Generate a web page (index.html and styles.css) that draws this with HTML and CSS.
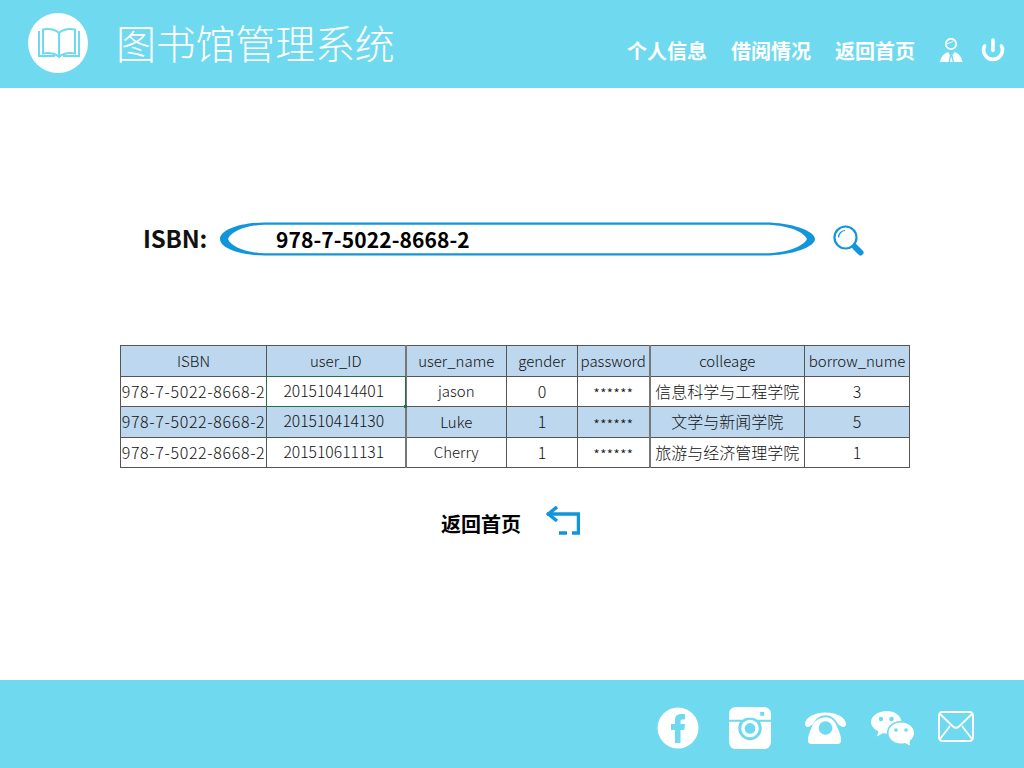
FILE: index.html
```html
<!DOCTYPE html>
<html lang="zh-CN">
<head>
    <meta charset="UTF-8">
    <meta name="viewport" content="width=device-width, initial-scale=1.0">
    <title>图书馆管理系统</title>
    <link rel="stylesheet" href="styles.css">
</head>
<body>
    <header class="top-bar">
        <div class="logo">
            <svg class="logo-book" width="42" height="32" viewBox="0 0 42 32">
                <path d="M21 6C17 2.500 11 1.500 5 2.500V26.500C11 25.500 17 26.500 21 30C25 26.500 31 25.500 37 26.500V2.500C31 1.500 25 2.500 21 6ZM21 6V30" fill="none" stroke="#6fd9ef" stroke-width="2"/>
                <path d="M1 4V29H17M41 4V29H25" fill="none" stroke="#6fd9ef" stroke-width="2"/>
            </svg>
        </div>
        <h1 class="site-title">图书馆管理系统</h1>
        <nav class="nav">
            <a class="nav-link" href="#">个人信息</a>
            <a class="nav-link" href="#">借阅情况</a>
            <a class="nav-link" href="#">返回首页</a>
        </nav>
        <div class="top-icons">
            <svg width="23" height="25" viewBox="0 0 23 25">
                <circle cx="11" cy="6" r="5.200" fill="none" stroke="#fff" stroke-width="1.800"/>
                <path d="M6.500 5.500C9 5.500 11 4.500 13 3" fill="none" stroke="#fff" stroke-width="1"/>
                <path d="M0 24C1 19 3 16 8 14L10 17L8.500 24ZM22.500 24C21.500 19 19.500 16 14.500 14L12.500 17L14 24ZM9.800 24L11.200 18.500L12.700 24Z" fill="#fff"/>
            </svg>
            <svg width="24" height="25" viewBox="0 0 24 25">
                <path d="M12 2V12.500" stroke="#fff" stroke-width="3.600" stroke-linecap="round"/>
                <path d="M3.500 8A9.400 9.400 0 1 0 20.500 8" fill="none" stroke="#fff" stroke-width="3.600" stroke-linecap="round"/>
            </svg>
        </div>
    </header>

    <main class="content">
        <div class="search-row">
            <span class="search-label">ISBN:</span>
            <div class="search-box">
                <svg class="search-ring" width="595" height="34" viewBox="0 0 595 34">
                    <path fill-rule="evenodd" fill="#1296db" d="M0 17C0 8 20 .5 45 .5H545C572 .5 595 9 595 17C595 25 572 33.500 545 33.500H45C20 33.500 0 26 0 17ZM8 17C11 9 28 2.800 45 2.800H545C566 2.800 583 9 587 17C583 25 566 31.200 545 31.200H45C28 31.200 11 25 8 17Z"/>
                </svg>
                <span class="search-value">978-7-5022-8668-2</span>
            </div>
            <svg class="search-icon" width="31" height="31" viewBox="0 0 31 31">
                <circle cx="12.500" cy="12.500" r="11" fill="none" stroke="#1296db" stroke-width="2.200"/>
                <path d="M5.500 12.500A7 7 0 0 1 12 5.500" fill="none" stroke="#1296db" stroke-width="1.200"/>
                <path d="M22 22L27.500 27.500" stroke="#1296db" stroke-width="6" stroke-linecap="round"/>
            </svg>
        </div>

        <table class="records">
            <colgroup>
                <col class="col-isbn"><col class="col-id"><col class="col-name"><col class="col-gender">
                <col class="col-pass"><col class="col-college"><col class="col-num">
            </colgroup>
            <thead>
                <tr class="shaded">
                    <th>ISBN</th><th>user_ID</th><th>user_name</th><th>gender</th><th>password</th><th>colleage</th><th>borrow_nume</th>
                </tr>
            </thead>
            <tbody>
                <tr>
                    <td class="isbn">978-7-5022-8668-2</td><td class="selected">201510414401</td><td class="latin">jason</td><td>0</td><td class="stars">******</td><td>信息科学与工程学院</td><td>3</td>
                </tr>
                <tr class="shaded">
                    <td class="isbn">978-7-5022-8668-2</td><td>201510414130</td><td class="latin">Luke</td><td>1</td><td class="stars">******</td><td>文学与新闻学院</td><td>5</td>
                </tr>
                <tr>
                    <td class="isbn">978-7-5022-8668-2</td><td>201510611131</td><td class="latin">Cherry</td><td>1</td><td class="stars">******</td><td>旅游与经济管理学院</td><td>1</td>
                </tr>
            </tbody>
        </table>

        <a class="back-row" href="#">
            <span class="back-text">返回首页</span>
            <svg width="34" height="30" viewBox="0 0 34 30">
                <path d="M1 8H32.500V26" fill="none" stroke="#1296db" stroke-width="3.500"/>
                <path d="M11 1L2.500 8L11 15" fill="none" stroke="#1296db" stroke-width="3.500"/>
                <path d="M13 27H21M26 27H34" stroke="#1296db" stroke-width="3.500"/>
            </svg>
        </a>
    </main>

    <footer class="bottom-bar">
        <svg width="42" height="42" viewBox="0 0 42 42">
            <circle cx="21" cy="21" r="20.500" fill="#fff"/>
            <path d="M18 36V23H14V17H18V13C18 9 20.500 7 24 7H28V12.500H25.500C24 12.500 23.500 13.200 23.500 14.500V17H28L27.300 23H23.500V36Z" fill="#6fd9ef"/>
        </svg>
        <svg class="insta-icon" width="42" height="42" viewBox="0 0 43 43">
            <path fill="#fff" d="M7 0H36C40 0 43 3 43 7V13H29C27 11.500 24.500 11 21.500 11C18.500 11 16 11.500 14 13H0V7C0 3 3 0 7 0Z"/>
            <path fill="#fff" d="M0 15H11.500C10 17 9.500 19.500 9.500 22A12 12 0 0 0 33.500 22C33.500 19.500 33 17 31.500 15H43V35C43 40 40 43 36 43H7C3 43 0 40 0 35Z"/>
            <circle cx="21.500" cy="22" r="9" fill="#fff"/>
            <circle cx="21.500" cy="22" r="5.500" fill="#6fd9ef"/>
            <rect x="32" y="5" width="4" height="4" fill="#6fd9ef"/>
        </svg>
        <svg class="phone-icon" width="41" height="33" viewBox="0 0 42 33">
            <path fill="#fff" d="M0 12C0 5 10 0 21 0C32 0 42 5 42 12C42 14.500 40 15.500 37.500 14.500L34 12.500C31 6 26 3 21 3C16 3 11 6 8 12.500L4.500 14.500C2 15.500 0 14.500 0 12Z"/>
            <path fill="#fff" fill-rule="evenodd" d="M21 5C27 5 31 9 33 15C35 20 37 24 37 28C37 31 36 32.500 33 32.500H7C4 32.500 3 31 3 28C3 24 5 20 7 15C9 9 15 5 21 5ZM21 9A7 7 0 1 0 21 23A7 7 0 1 0 21 9Z"/>
        </svg>
        <svg class="chat-icon" width="43" height="35" viewBox="0 0 43 35">
            <path fill="#fff" d="M15.500 0C24 0 30 5 30.500 10.500C22 9.500 16 15 17.500 22.500C15.500 22.800 13.500 22.500 12 22L6 25.500L7.500 20.500C3 18 0 15 0 11C0 5 7 0 15.500 0Z"/>
            <path fill="#6fd9ef" d="M30 10C38 10 44 14 44 22C44 29 38 34 30 34C24 34 16 29 16 21C16 14 24 10 30 10Z"/>
            <path fill="#fff" d="M30 11.500C37 11.500 43 16 43 22C43 25.500 41 28 38.500 30L39 34.500L34 32C33 32.500 31 32.500 30 32.500C23 32.500 17.500 28 17.500 22C17.500 16 23 11.500 30 11.500Z"/>
            <circle cx="10" cy="8" r="2.200" fill="#6fd9ef"/><circle cx="20.500" cy="8" r="2.200" fill="#6fd9ef"/>
            <circle cx="25" cy="19" r="1.800" fill="#6fd9ef"/><circle cx="35" cy="19" r="1.800" fill="#6fd9ef"/>
        </svg>
        <svg class="mail-icon" width="36" height="31" viewBox="0 0 36 31">
            <rect x="1" y="1" width="34" height="29" rx="3.500" fill="none" stroke="#fff" stroke-width="2"/>
            <path d="M2 3L15 15.500C17 17.200 19 17.200 21 15.500L34 3M2 28L12 15M34 28L24 15" fill="none" stroke="#fff" stroke-width="1.800"/>
        </svg>
    </footer>
</body>
</html>
```

FILE: styles.css
```css
* {
    box-sizing: border-box;
}

body {
    margin: 0;
    height: 768px;
    display: flex;
    flex-direction: column;
    overflow: hidden;
    background-color: #fff;
    font-family: "Noto Sans CJK SC", sans-serif;
}

.top-bar {
    height: 88px;
    flex-shrink: 0;
    display: flex;
    align-items: center;
    padding-left: 28px;
    background-color: #6fd9ef;
    color: #fff;
}

.logo {
    width: 60px;
    height: 60px;
    margin-top: -3px;
    padding-left: 2px;
    display: flex;
    align-items: center;
    justify-content: center;
    border-radius: 50%;
    background-color: #fff;
}

.site-title {
    margin: -5px 0 0 28px;
    font-size: 40px;
    font-weight: 300;
    line-height: 1;
    letter-spacing: -0.2px;
}

.nav {
    margin: 14px 0 0 auto;
    display: flex;
    gap: 24px;
}

.nav-link {
    color: #fff;
    font-size: 20px;
    font-weight: 700;
    line-height: 1;
    text-decoration: none;
}

.top-icons {
    margin: 12px 19px 0 25px;
    display: flex;
    align-items: center;
    gap: 18px;
}

.content {
    flex: 1;
    padding-top: 134px;
}

.search-row {
    height: 34px;
    display: flex;
    align-items: center;
    padding-left: 143px;
}

.search-label {
    width: 77px;
    margin-top: -4px;
    font-size: 24px;
    font-weight: 700;
    letter-spacing: -0.2px;
    color: #111;
}

.search-box {
    position: relative;
    width: 595px;
    height: 34px;
    display: flex;
    align-items: center;
    padding-left: 56px;
}

.search-ring {
    position: absolute;
    top: 0;
    left: 0;
}

.search-value {
    position: relative;
    font-size: 21px;
    font-weight: 700;
    letter-spacing: 0.1px;
    color: #000;
}

.search-icon {
    margin: 2px 0 0 18px;
}

.records {
    width: 789px;
    margin: 89px 0 0 120px;
    border-collapse: collapse;
    table-layout: fixed;
    color: #111;
    font-size: 16px;
    font-weight: 300;
    line-height: 1;
    text-align: center;
}

.col-isbn { width: 146px; }
.col-id { width: 139px; }
.col-name { width: 101px; }
.col-gender { width: 71px; }
.col-pass { width: 72px; }
.col-college { width: 155px; }
.col-num { width: 105px; }

.records tr {
    height: 30px;
}

.records tr.shaded {
    height: 31px;
}

.records th,
.records td {
    padding: 0 0 2px;
    border: 1px solid #555;
    font-weight: 300;
    white-space: nowrap;
}

.records th {
    font-size: 15px;
}

/* the two heavier column rules */
.records tr > :nth-child(2),
.records tr > :nth-child(5) {
    border-right: 2px solid #777;
}

.records td:nth-child(2) {
    padding-right: 4px;
    font-size: 15.7px;
}

.shaded {
    background-color: #bdd7ee;
}

.records .isbn {
    letter-spacing: 0.65px;
}

.records .latin {
    font-size: 15px;
}

.records .stars {
    padding: 4px 0 0;
    font-size: 15px;
}

.records .selected {
    position: relative;
}

.records .selected::before {
    content: "";
    position: absolute;
    top: -1px;
    right: -1px;
    bottom: -1px;
    left: -1px;
    border: 1px solid #217346;
}

.records .selected::after {
    content: "";
    position: absolute;
    right: -2px;
    bottom: -2px;
    width: 3px;
    height: 3px;
    background-color: #217346;
}

.back-row {
    width: 140px;
    margin: 38px 0 0 441px;
    display: flex;
    align-items: flex-start;
    gap: 25px;
    color: #000;
    text-decoration: none;
}

.back-text {
    margin-top: 4px;
    font-size: 20px;
    font-weight: 700;
    line-height: 27px;
}

.bottom-bar {
    height: 88px;
    flex-shrink: 0;
    display: flex;
    align-items: center;
    gap: 24px;
    padding: 8px 0 0 657px;
    background-color: #6fd9ef;
}

.insta-icon {
    margin-left: 6px;
}

.phone-icon {
    margin-left: 10px;
}

.chat-icon {
    margin-left: 1px;
}

.mail-icon {
    margin-top: -3px;
}
```
